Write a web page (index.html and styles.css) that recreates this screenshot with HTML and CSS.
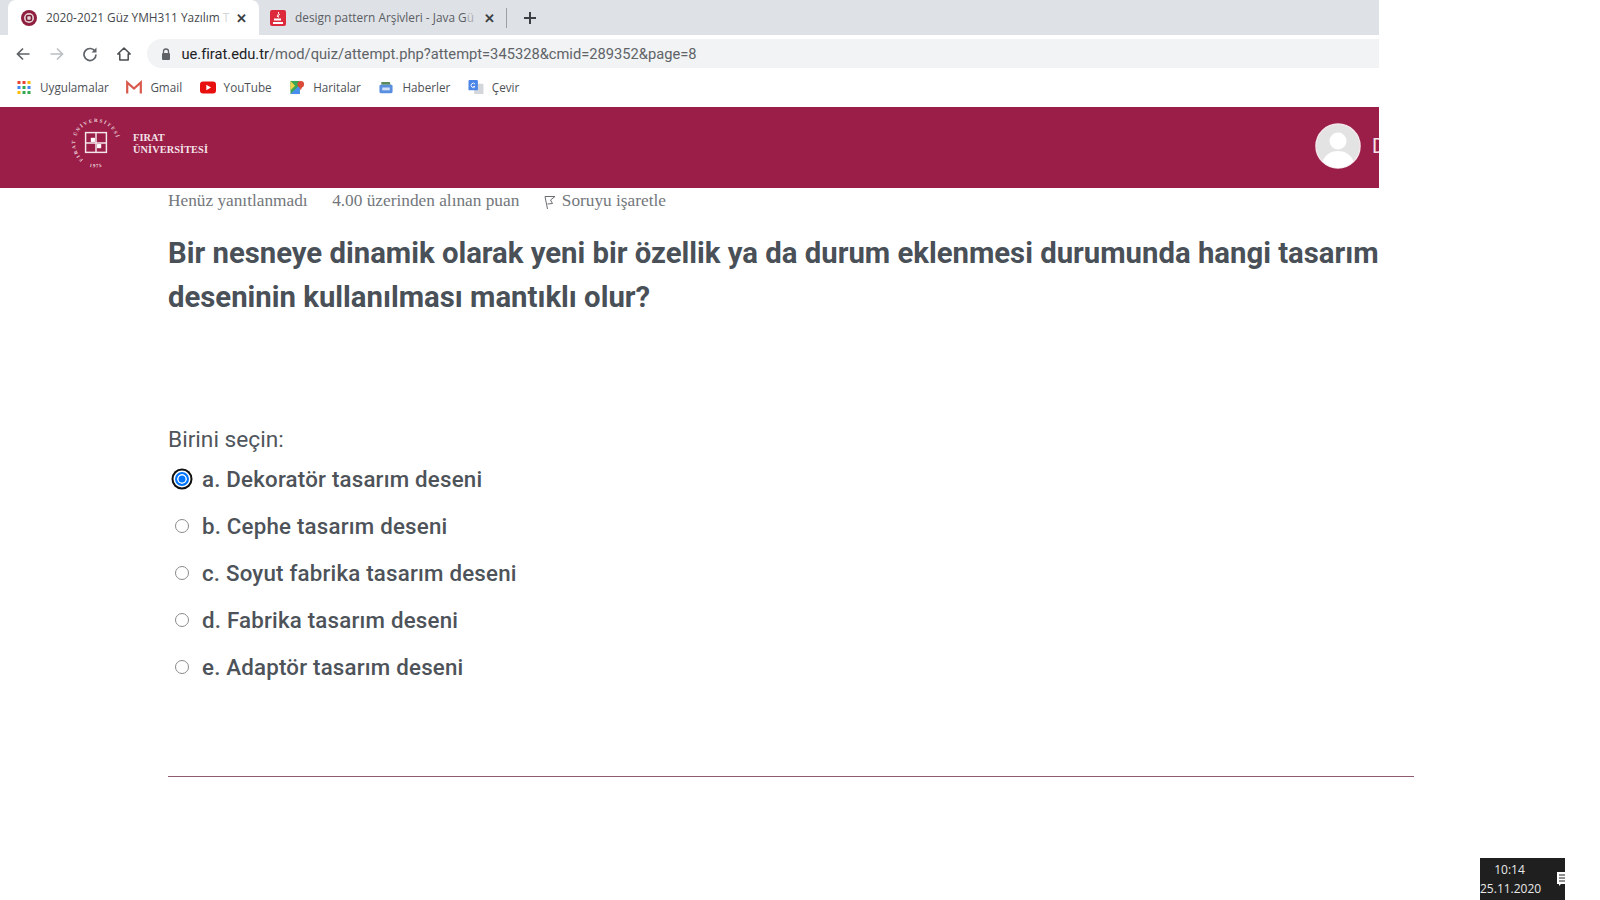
FILE: index.html
```html
<!DOCTYPE html>
<html lang="tr">
<head>
    <meta charset="utf-8">
    <title>2020-2021 Güz YMH311 Yazılım</title>
    <link rel="stylesheet" href="styles.css">
</head>
<body>
    <div class="browser">
        <div class="tabstrip">
            <div class="tab tab-active">
                <svg class="favicon" viewBox="0 0 16 16"><circle cx="8" cy="8" r="8" fill="#8f1f3f"/><circle cx="8" cy="8" r="5" fill="#e8d4d8"/><rect x="5.5" y="5.5" width="5" height="5" rx="1.5" fill="none" stroke="#7a1a34" stroke-width="1.6"/></svg>
                <span class="tab-title">2020-2021 Güz YMH311 Yazılım <span class="faded">T</span></span>
                <span class="tab-close">✕</span>
            </div>
            <div class="tab">
                <svg class="favicon" viewBox="0 0 16 16"><rect width="16" height="16" rx="2" fill="#dc2a3c"/><path d="M8.5 2c1 2-2 3-1 5M10 4c-1 1-2 1.500-1.500 3.500" fill="none" stroke="#fff" stroke-width="1"/><rect x="4" y="8.500" width="7" height="2" fill="#fff"/><rect x="3" y="12" width="10" height="2" fill="#fff"/></svg>
                <span class="tab-title">design pattern Arşivleri - Java G<span class="faded-soft">ü</span></span>
                <span class="tab-close">✕</span>
            </div>
            <div class="tab-sep"></div>
            <svg class="new-tab" viewBox="0 0 14 14"><path d="M7 1v12M1 7h12" stroke="#3c4043" stroke-width="2"/></svg>
        </div>
        <div class="toolbar">
            <svg class="nav-icon" viewBox="0 0 16 16"><path d="M14.500 8H2.500M8 2.500 2.500 8 8 13.500" fill="none" stroke="#5f6368" stroke-width="1.700"/></svg>
            <svg class="nav-icon" viewBox="0 0 16 16"><path d="M1.500 8h12M8 2.500 13.500 8 8 13.500" fill="none" stroke="#bcc0c4" stroke-width="1.700"/></svg>
            <svg class="nav-icon" viewBox="0 0 16 16"><path d="M13.200 5.500A6 6 0 1 0 14 8.500" fill="none" stroke="#5f6368" stroke-width="1.700"/><path d="M14.500 1.500v5h-5z" fill="#5f6368"/></svg>
            <svg class="nav-icon" viewBox="0 0 16 16"><path d="M8 2 1.800 8h2v6h8.400V8h2z" fill="none" stroke="#4a4d50" stroke-width="1.500" stroke-linejoin="round"/></svg>
            <div class="omnibox">
                <svg class="lock" viewBox="0 0 10 12"><path d="M2.500 5V3.500a2.500 2.500 0 0 1 5 0V5" fill="none" stroke="#5f6368" stroke-width="1.300"/><rect x="1" y="5" width="8" height="7" rx="1" fill="#5f6368"/></svg>
                <span class="url"><span class="url-host">ue.firat.edu.tr</span>/mod/quiz/attempt.php?attempt=345328&amp;cmid=289352&amp;page=8</span>
            </div>
        </div>
        <div class="bookmarks">
            <div class="bookmark">
                <svg class="bm-icon" viewBox="0 0 15 15"><g>
                    <rect x="1" y="1" width="3" height="3" fill="#ea4335"/><rect x="6" y="1" width="3" height="3" fill="#ea4335"/><rect x="11" y="1" width="3" height="3" fill="#fbbc05"/>
                    <rect x="1" y="6" width="3" height="3" fill="#4285f4"/><rect x="6" y="6" width="3" height="3" fill="#34a853"/><rect x="11" y="6" width="3" height="3" fill="#4285f4"/>
                    <rect x="1" y="11" width="3" height="3" fill="#fbbc05"/><rect x="6" y="11" width="3" height="3" fill="#34a853"/><rect x="11" y="11" width="3" height="3" fill="#34a853"/>
                </g></svg>
                <span>Uygulamalar</span>
            </div>
            <div class="bookmark">
                <svg class="bm-icon" viewBox="0 0 16 14"><path d="M1.200 13V2L8 8l6.800-6v11" fill="none" stroke="#d9594c" stroke-width="2.200"/></svg>
                <span>Gmail</span>
            </div>
            <div class="bookmark">
                <svg class="bm-icon" viewBox="0 0 16 12"><rect width="16" height="12" rx="3" fill="#e8100f"/><path d="M6.300 3.200 11 6l-4.700 2.800z" fill="#fff"/></svg>
                <span>YouTube</span>
            </div>
            <div class="bookmark">
                <svg class="bm-icon" viewBox="0 0 16 16"><path d="M1 1h10v14H1z" fill="#3aa757"/><path d="M1 15 11 5v10z" fill="#4a8df0"/><path d="M1 1l5 5-5 5z" fill="#f3d34a"/><circle cx="12" cy="4.500" r="3.500" fill="#d94a38"/><path d="M10 6.500 12 11l2-4.500z" fill="#d94a38"/></svg>
                <span>Haritalar</span>
            </div>
            <div class="bookmark">
                <svg class="bm-icon" viewBox="0 0 16 16"><path d="M3 2h9l1 3H3z" fill="#5a8a5a"/><rect x="1" y="5" width="14" height="9" rx="1.500" fill="#5a8fe0"/><rect x="4" y="8" width="8" height="3" fill="#cfe0f7"/></svg>
                <span>Haberler</span>
            </div>
            <div class="bookmark">
                <svg class="bm-icon" viewBox="0 0 16 16"><rect x="6" y="4" width="10" height="11" rx="1" fill="#d3d7dc"/><rect x="0" y="0" width="10" height="11" rx="1" fill="#4a86e8"/><path d="M7 4.500A2.300 2.300 0 1 0 7 7H5" fill="none" stroke="#fff" stroke-width="1"/></svg>
                <span>Çevir</span>
            </div>
        </div>
        <header class="banner">
            <div class="brand">
                <svg class="seal" viewBox="0 0 50 50">
                    <defs>
                        <path id="seal-ring" d="M25 45A20 20 0 1 1 25.010 45"/>
                        <path id="seal-bottom" d="M13 45.300A23.500 23.500 0 0 0 37 45.300"/>
                    </defs>
                    <text class="seal-text"><textPath href="#seal-ring" startOffset="13">FIRAT ÜNİVERSİTESİ</textPath></text>
                    <text class="seal-text seal-year" text-anchor="middle"><textPath href="#seal-bottom" startOffset="50%">1975</textPath></text>
                    <rect x="15" y="15" width="20" height="19" fill="none" stroke="#f5e6ea" stroke-width="1.400"/>
                    <path d="M25 15v19M15 25h20" stroke="#f5e6ea" stroke-width="1.400"/>
                    <rect x="20" y="20" width="4" height="4" fill="#fff"/><rect x="26" y="26" width="4" height="4" fill="#fff"/>
                </svg>
                <div class="brand-name">FIRAT<br>ÜNİVERSİTESİ</div>
            </div>
            <div class="user">
                <svg class="avatar" viewBox="0 0 46 46"><circle cx="23" cy="23" r="22" fill="#e3e3e3" stroke="#f4e6ea" stroke-width="1.500"/><circle cx="23" cy="18" r="8.500" fill="#fff"/><path d="M7.500 38.500C10 31 17 28 23 28s13 3 15.500 10.500A22 22 0 0 1 7.500 38.500z" fill="#fff"/></svg>
                <span class="user-name">D</span>
            </div>
        </header>
    </div>

    <main class="question">
        <div class="meta">
            <span>Henüz yanıtlanmadı</span>
            <span>4.00 üzerinden alınan puan</span>
            <span class="flag">
                <svg class="flag-icon" viewBox="0 0 12 15"><path d="M3.500 14 1 1.500h10L6.500 5l2 3.500-5 .5" fill="none" stroke="#6a6e73" stroke-width="1"/></svg>
                Soruyu işaretle
            </span>
        </div>
        <h1 class="question-text">Bir nesneye dinamik olarak yeni bir özellik ya da durum eklenmesi durumunda hangi tasarım deseninin kullanılması mantıklı olur?</h1>
        <div class="prompt">Birini seçin:</div>
        <div class="answers">
            <div class="answer"><span class="radio radio-on"></span><span>a. Dekoratör tasarım deseni</span></div>
            <div class="answer"><span class="radio"></span><span>b. Cephe tasarım deseni</span></div>
            <div class="answer"><span class="radio"></span><span>c. Soyut fabrika tasarım deseni</span></div>
            <div class="answer"><span class="radio"></span><span>d. Fabrika tasarım deseni</span></div>
            <div class="answer"><span class="radio"></span><span>e. Adaptör tasarım deseni</span></div>
        </div>
        <div class="divider"></div>
    </main>

    <div class="taskbar">
        <div class="clock">10:14<br>25.11.2020</div>
        <svg class="notif" viewBox="0 0 10 16"><path d="M0 1h10v12H4l-2 2v-2H0z" fill="#fff"/><path d="M2 4h8M2 7h8M2 10h8" stroke="#222" stroke-width="1"/></svg>
    </div>
</body>
</html>
```

FILE: styles.css
```css
html, body {
    margin: 0;
    height: 100%;
    overflow: hidden;
    background: #fff;
}

.browser {
    width: 1379px;
    overflow: hidden;
    font-family: "Open Sans", sans-serif;
}

.tabstrip {
    height: 35px;
    background: #dee1e6;
    display: flex;
    align-items: center;
    padding-left: 8px;
}
.tab {
    width: 252px;
    height: 35px;
    box-sizing: border-box;
    padding: 0 16px 0 11px;
    display: flex;
    align-items: center;
    font-size: 11.850px;
    color: #5a5e63;
}
.tab-active {
    width: 251px;
    padding: 0 12px 0 13px;
    background: #fff;
    border-radius: 8px 8px 0 0;
    color: #45494d;
}
.favicon {
    width: 16px;
    height: 16px;
    flex: none;
    margin-right: 9px;
}
.tab-title {
    flex: 1;
    margin-top: -2px;
    white-space: nowrap;
}
.faded {
    color: #d5d7da;
}
.faded-soft {
    color: #a9acb0;
}
.tab-close {
    font-size: 13px;
    font-weight: 700;
    color: #3c4043;
}
.tab-sep {
    width: 1px;
    height: 20px;
    background: #9aa0a6;
    margin-left: -5px;
}
.new-tab {
    width: 14px;
    height: 14px;
    margin-left: 16px;
}

.toolbar {
    height: 33px;
    box-sizing: border-box;
    padding: 4px 0 0 15px;
    display: flex;
    align-items: center;
    background: #fff;
}
.nav-icon {
    width: 16px;
    height: 16px;
    margin-right: 17.600px;
    flex: none;
}
.omnibox {
    flex: 1;
    height: 29px;
    margin-left: -2px;
    padding-left: 14px;
    display: flex;
    align-items: center;
    background: #f1f3f4;
    border-radius: 15px 0 0 15px;
    font-family: "Roboto", sans-serif;
    font-size: 14.700px;
    color: #5f6368;
}
.lock {
    width: 10px;
    height: 12px;
    margin-right: 10px;
}
.url-host {
    color: #202124;
}

.bookmarks {
    height: 38px;
    padding-left: 16px;
    display: flex;
    align-items: center;
    gap: 17.500px;
    font-size: 11.700px;
    color: #4d5156;
    background: #fff;
}
.bookmark {
    display: flex;
    align-items: center;
    gap: 8px;
}
.bm-icon {
    width: 16px;
    height: 15px;
}

.banner {
    height: 81px;
    margin-top: 1px;
    background: #9a1e48;
    display: flex;
    align-items: center;
    justify-content: space-between;
    padding: 0 0 0 70px;
}
.brand {
    display: flex;
    align-items: center;
    gap: 11px;
    margin-top: -10px;
}
.seal {
    width: 52px;
    height: 52px;
    overflow: visible;
}
.seal-text {
    font-family: "Liberation Serif", serif;
    font-size: 4.800px;
    font-weight: 700;
    letter-spacing: 1.500px;
    fill: #f0d9df;
}
.seal-year {
    letter-spacing: 0.800px;
}
.brand-name {
    margin-top: 3px;
    font-family: "Liberation Serif", serif;
    font-weight: 700;
    font-size: 10.300px;
    line-height: 12px;
    letter-spacing: 0.100px;
    color: #f5e3e8;
}
.user {
    display: flex;
    align-items: center;
    width: 64px;
    margin-top: -4px;
    overflow: hidden;
}
.avatar {
    width: 46px;
    height: 46px;
    flex: none;
}
.user-name {
    margin-left: 11px;
    font-family: "Roboto", sans-serif;
    font-size: 20px;
    color: #f5e3e8;
}

.question {
    width: 1246px;
    margin-left: 168px;
    color: #495057;
}
.meta {
    display: flex;
    gap: 24.500px;
    height: 20px;
    padding-top: 3px;
    font-family: "Liberation Serif", serif;
    font-size: 17.300px;
    line-height: 20px;
    color: #73777c;
}
.flag {
    display: flex;
    align-items: center;
    gap: 6px;
}
.flag-icon {
    width: 12px;
    height: 15px;
    margin-top: 3px;
}
.question-text {
    width: 1214px;
    margin: 20px 0 0;
    font-family: "Roboto", sans-serif;
    font-size: 29.300px;
    font-weight: 700;
    line-height: 44px;
    color: #495057;
}
.prompt {
    margin-top: 106px;
    font-family: "Roboto", sans-serif;
    font-size: 22.700px;
    line-height: 30px;
    color: #50565c;
}
.answers {
    font-family: "Roboto", sans-serif;
    font-size: 22.300px;
    font-weight: 500;
    letter-spacing: 0.200px;
    color: #4d5359;
}
.answer {
    height: 47px;
    display: flex;
    align-items: center;
    gap: 9px;
    padding-left: 3px;
}
.radio {
    box-sizing: border-box;
    width: 14px;
    height: 14px;
    margin: 0 4px;
    flex: none;
    border: 1px solid #8b8b8b;
    border-radius: 50%;
    background: #fff;
}
.radio-on {
    border: 2px solid #0075ff;
    background: #0075ff;
    box-shadow: inset 0 0 0 1.500px #fff, 0 0 0 1.500px #fff, 0 0 0 3.500px #101010;
}
.divider {
    height: 1px;
    margin-top: 86px;
    background: #8e5b70;
}

.taskbar {
    position: absolute;
    left: 1480px;
    top: 858px;
    width: 85px;
    height: 42px;
    background: #1f1f1f;
    overflow: hidden;
    color: #e8e8e8;
    font-family: "Open Sans", sans-serif;
    font-size: 12px;
    line-height: 19px;
}
.clock {
    width: 59px;
    text-align: center;
    padding-top: 2px;
}
.notif {
    position: absolute;
    left: 77px;
    top: 13px;
    width: 10px;
    height: 16px;
}
```
